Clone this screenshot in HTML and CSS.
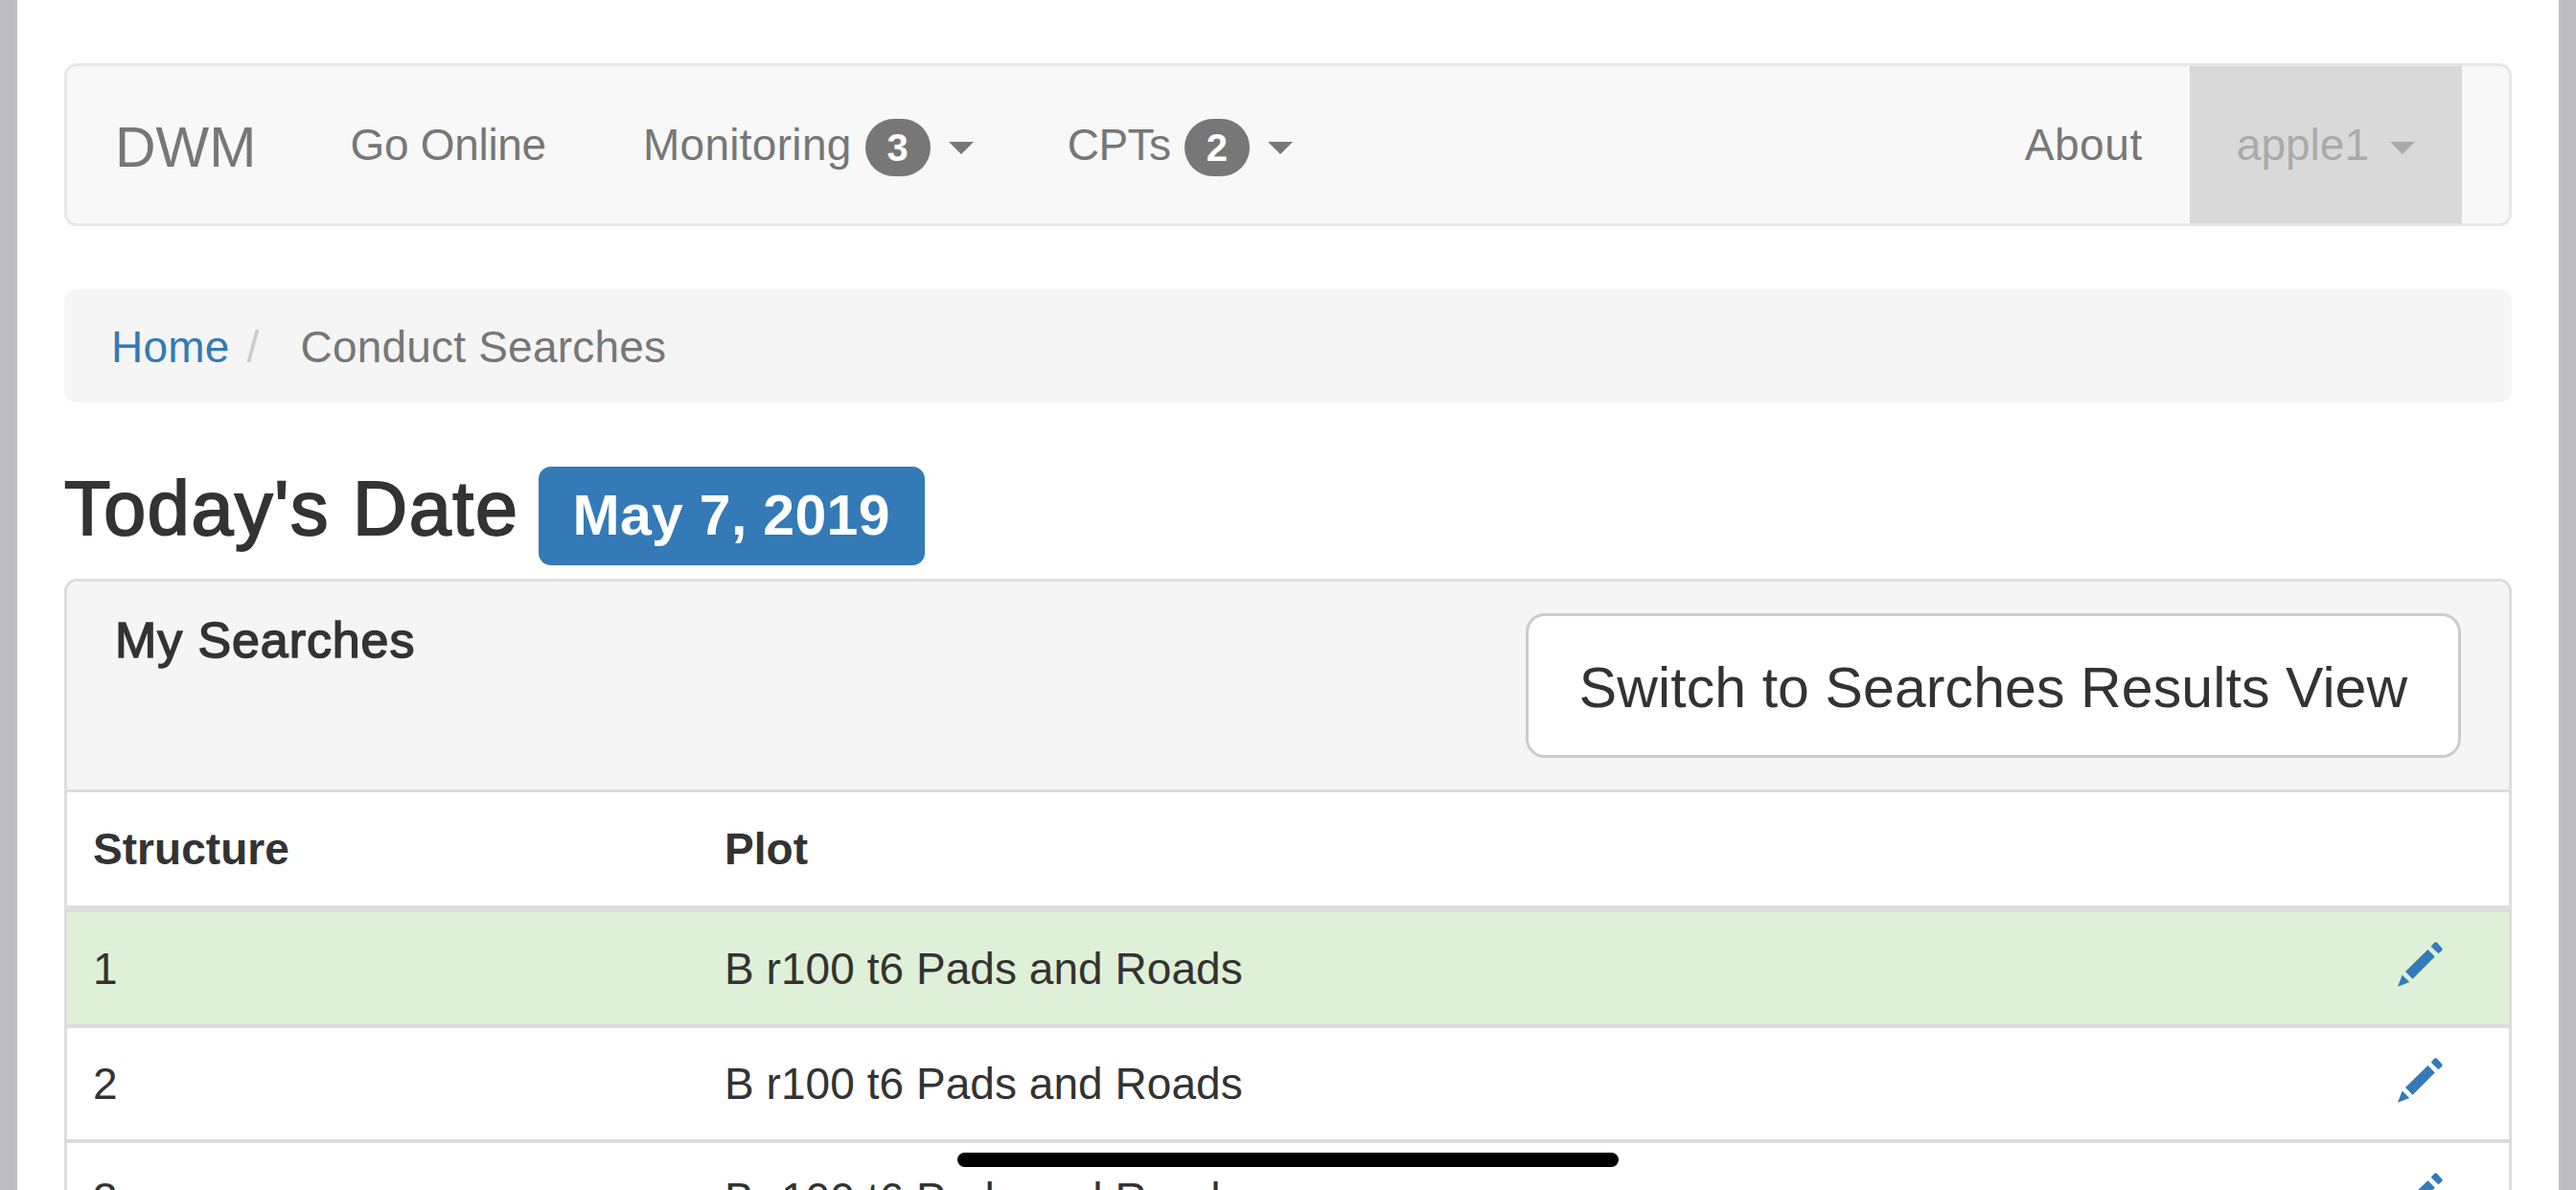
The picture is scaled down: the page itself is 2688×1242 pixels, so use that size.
FILE: index.html
```html
<!DOCTYPE html>
<html lang="en">
<head>
    <meta charset="UTF-8">
    <meta name="viewport" content="width=device-width, initial-scale=1.0">
    <title>DWM - Conduct Searches</title>

    <link rel="stylesheet" href="styles.css">
</head>
<body>

    <!-- Pencil icon used in the table rows -->
    <svg class="icon-defs" width="0" height="0">
        <symbol id="pencil" viewBox="0 0 142 142">
            <path d="M95 24 L117 47 L47 117 L24 94 Z"/>
            <path d="M105 14 L114 4 Q119 -2 125 4 L138 18 Q144 24 138 29 L128 37 Z"/>
            <path d="M14 104 L37 127 L0 141 Z"/>
        </symbol>
    </svg>

    <div class="container">

        <!-- Navbar -->
        <nav class="navbar">
            <a class="navbar-brand" href="#">DWM</a>
            <ul class="nav">
                <li><a href="#" class="online">Go Online</a></li>
                <li><a href="#" class="monitoring">Monitoring <span class="badge">3</span> <b class="caret"></b></a></li>
                <li><a href="#" class="cpts">CPTs <span class="badge">2</span> <b class="caret"></b></a></li>
            </ul>
            <ul class="nav navbar-right">
                <li><a href="#" class="about">About</a></li>
                <li class="active"><a href="#">apple1 <b class="caret"></b></a></li>
            </ul>
        </nav>

        <!-- Breadcrumb -->
        <ol class="breadcrumb">
            <li><a href="#">Home</a></li>
            <li class="slash">/</li>
            <li class="current">Conduct Searches</li>
        </ol>

        <h3 class="today"><span class="today-text">Today's Date</span> <span class="label">May 7, 2019</span></h3>

        <!-- Searches -->
        <div class="panel">
            <div class="panel-heading">
                <h4 class="panel-title">My Searches</h4>
                <button class="btn">Switch to Searches Results View</button>
            </div>
            <table class="table">
                <thead>
                    <tr><th class="col-structure">Structure</th><th>Plot</th><th class="col-edit"></th></tr>
                </thead>
                <tbody>
                    <tr class="success">
                        <td>1</td>
                        <td>B r100 t6 Pads and Roads</td>
                        <td class="edit"><svg class="icon"><use href="#pencil"/></svg></td>
                    </tr>
                    <tr>
                        <td>2</td>
                        <td>B r100 t6 Pads and Roads</td>
                        <td class="edit"><svg class="icon"><use href="#pencil"/></svg></td>
                    </tr>
                    <tr>
                        <td>3</td>
                        <td>B r100 t6 Pads and Roads</td>
                        <td class="edit"><svg class="icon"><use href="#pencil"/></svg></td>
                    </tr>
                </tbody>
            </table>
        </div>
    </div>

    <div class="home-indicator"></div>

</body>
</html>
```

FILE: styles.css
```css
* {
    box-sizing: border-box;
}

html {
    overflow: hidden;
}

body {
    font-family: "Helvetica Neue", "Liberation Sans", Arial, sans-serif;
    font-size: 46px;
    line-height: 66px;
    margin: 0;
    height: 1242px;
    overflow: hidden;
    position: relative;
    background-color: #fff;
    color: #333;
    border-left: 18px solid #bebdc3;
    border-right: 18px solid #bebdc3;
}

a {
    color: #337ab7;
    text-decoration: none;
}

ul, ol {
    list-style: none;
    margin: 0;
    padding: 0;
}

.icon-defs {
    position: absolute;
}

.container {
    padding: 66px 49px 0;
}

/* Navbar */
.navbar {
    display: flex;
    height: 170px;
    padding: 0 49px;
    background-color: #f8f8f8;
    border: 3px solid #e7e7e7;
    border-radius: 13px;
}

.navbar a {
    color: #777;
    display: flex;
    align-items: center;
    height: 164px;
}

.navbar .navbar-brand {
    font-size: 59px;
    padding: 6px 49px 0 1px;
}

.nav {
    display: flex;
}

.nav a {
    padding: 0 49px;
}

.nav .online {
    letter-spacing: -0.3px;
    padding-right: 52px;
}

.nav .monitoring {
    letter-spacing: 0.3px;
}

.nav .cpts {
    letter-spacing: -0.5px;
}

.nav .about {
    letter-spacing: 0.6px;
}

.navbar-right {
    margin-left: auto;
}

.nav .active a {
    background-color: #d9d9d9;
    color: #aaa;
}

.badge {
    display: inline-block;
    width: 68px;
    height: 60px;
    margin: 6px 0 0 14px;
    border-radius: 30px;
    background-color: #777;
    color: #fff;
    font-size: 40px;
    font-weight: bold;
    line-height: 61px;
    text-align: center;
}

.caret {
    border-top: 13px solid;
    border-left: 13px solid transparent;
    border-right: 13px solid transparent;
    margin: 7px 0 0 19px;
}

.active .caret {
    margin-left: 22px;
}

/* Breadcrumb */
.breadcrumb {
    display: flex;
    height: 118px;
    margin-top: 66px;
    padding: 27px 49px 25px;
    background-color: #f5f5f5;
    border-radius: 13px;
    letter-spacing: 0.2px;
}

.slash {
    color: #ccc;
    padding: 0 43px 0 18px;
}

.current {
    color: #777;
}

/* Date heading */
.today {
    display: flex;
    align-items: baseline;
    height: 103px;
    margin: 59px 0 22px;
    font-size: 79px;
    line-height: 103px;
    font-weight: normal;
}

.today-text {
    letter-spacing: 1.7px;
    -webkit-text-stroke: 2px #333;
}

.label {
    width: 403px;
    height: 103px;
    margin-left: 20px;
    border-radius: 13px;
    background-color: #337ab7;
    color: #fff;
    font-size: 59px;
    font-weight: bold;
    letter-spacing: 0.3px;
    text-align: center;
}

/* Panel */
.panel {
    border: 3px solid #ddd;
    border-radius: 13px;
    overflow: hidden;
}

.panel-heading {
    display: flex;
    justify-content: space-between;
    align-items: flex-start;
    height: 220px;
    padding: 33px 50px;
    background-color: #f5f5f5;
    border-bottom: 3px solid #ddd;
}

.panel-title {
    margin: 0;
    font-size: 52px;
    line-height: 57px;
    font-weight: normal;
    letter-spacing: 0.9px;
    -webkit-text-stroke: 1.5px #333;
}

.btn {
    width: 976px;
    height: 151px;
    padding: 5px 0 0;
    border: 3px solid #ccc;
    border-radius: 20px;
    background-color: #fff;
    color: #333;
    font-family: inherit;
    font-size: 59px;
    letter-spacing: 0.1px;
    white-space: nowrap;
}

.table {
    width: 100%;
    table-layout: fixed;
    border-spacing: 0;
    letter-spacing: 0.05px;
}

.table th, .table td {
    height: 120px;
    padding: 0 27px;
    text-align: left;
    border-bottom: 4px solid #ddd;
}

.table th {
    height: 125px;
    border-bottom-width: 7px;
}

.col-structure {
    width: 659px;
}

.col-edit {
    width: 364px;
}

.table .success td {
    height: 121px;
    background-color: #dff0d8;
}

.table .edit {
    padding: 7px 69px 0 0;
    text-align: right;
}

.icon {
    display: inline-block;
    width: 47px;
    height: 47px;
    fill: #337ab7;
    overflow: visible;
}

/* Bar at the bottom of the phone screen */
.home-indicator {
    position: absolute;
    left: 981px;
    bottom: 24px;
    width: 690px;
    height: 15px;
    border-radius: 8px;
    background-color: #000;
}
```
